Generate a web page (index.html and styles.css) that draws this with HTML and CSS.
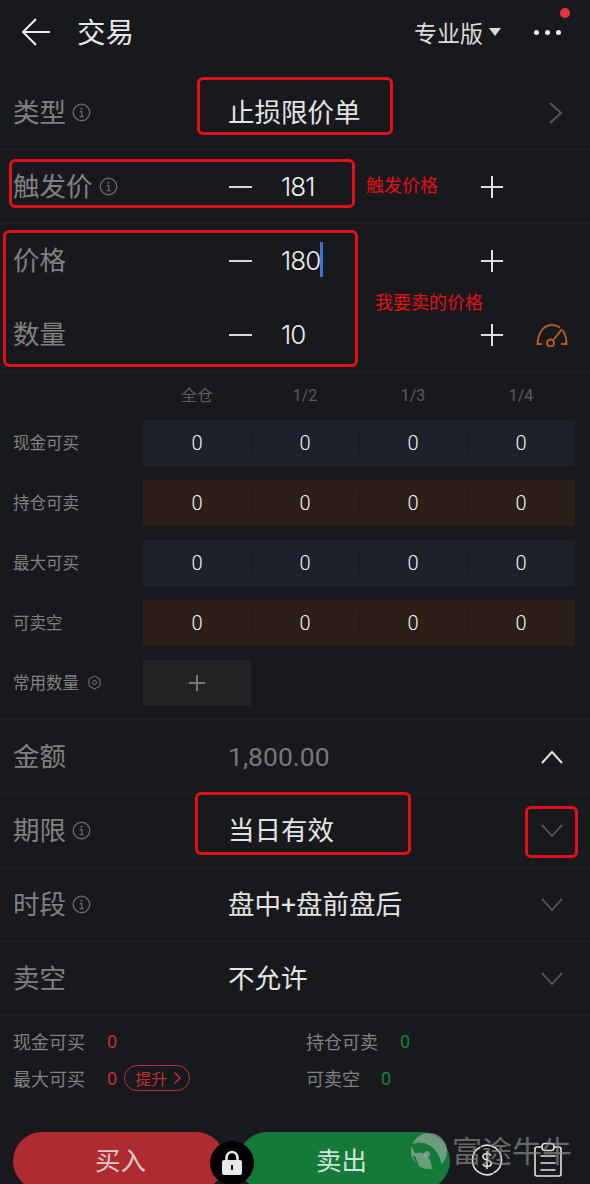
FILE: index.html
```html
<!DOCTYPE html>
<html lang="zh-CN">
<head>
  <meta charset="UTF-8" />
  <meta name="viewport" content="width=device-width, initial-scale=1" />
  <title>交易</title>
  <link rel="stylesheet" href="styles.css">
</head>
<body>
  <div class="page">
    <header class="topbar">
      <svg class="back-icon" width="30" height="30" viewBox="0 0 30 30"><path d="M15 2 2 15l13 13M2 15h27"/></svg>
      <div class="title">交易</div>
      <div class="version">专业版<span class="caret"></span></div>
      <div class="more"><span></span><span></span><span></span><i class="more-dot"></i></div>
    </header>

    <section class="form">
      <div class="row row-select">
        <div class="label">类型<svg class="info"><use href="#i-info"/></svg></div>
        <div class="value">止损限价单</div>
        <svg class="chev" viewBox="0 0 24 24"><use href="#i-right"/></svg>
      </div>
      <div class="row row-step">
        <div class="label">触发价<svg class="info"><use href="#i-info"/></svg></div>
        <div class="stepper"><span class="minus"></span><span class="num">181</span></div>
        <span class="plus"></span>
      </div>
      <div class="row row-step no-line">
        <div class="label">价格</div>
        <div class="stepper"><span class="minus"></span><span class="num">180<i class="cursor"></i></span></div>
        <span class="plus"></span>
      </div>
      <div class="row row-step">
        <div class="label">数量</div>
        <div class="stepper"><span class="minus"></span><span class="num">10</span></div>
        <span class="plus"></span>
        <svg class="gauge" width="32" height="24" viewBox="0 0 32 24">
          <path d="M6 21H1.500C2 9 8 2 16 2c3 0 6 1 8 2.500M26.500 7c2.500 3.500 4 8.500 4 14H25"/>
          <circle cx="14.500" cy="20" r="3.500"/>
          <path d="M17 17.500 26 6"/>
        </svg>
      </div>
    </section>

    <section class="qty">
      <div class="qty-row qty-head">
        <div></div>
        <div class="qty-cols"><span>全仓</span><span>1/2</span><span>1/3</span><span>1/4</span></div>
      </div>
      <div class="qty-row">
        <div class="qty-label">现金可买</div>
        <div class="qty-cols cells buy"><span>0</span><span>0</span><span>0</span><span>0</span></div>
      </div>
      <div class="qty-row">
        <div class="qty-label">持仓可卖</div>
        <div class="qty-cols cells sell"><span>0</span><span>0</span><span>0</span><span>0</span></div>
      </div>
      <div class="qty-row">
        <div class="qty-label">最大可买</div>
        <div class="qty-cols cells buy"><span>0</span><span>0</span><span>0</span><span>0</span></div>
      </div>
      <div class="qty-row">
        <div class="qty-label">可卖空</div>
        <div class="qty-cols cells sell"><span>0</span><span>0</span><span>0</span><span>0</span></div>
      </div>
      <div class="qty-row">
        <div class="qty-label">常用数量
          <svg class="hex" width="13" height="15" viewBox="0 0 13 15"><path d="M6.500 1 12 4v7l-5.500 3L1 11V4z"/><circle cx="6.500" cy="7.500" r="2"/></svg>
        </div>
        <div class="qty-cols"><span class="add-cell"><i class="plus plus-small"></i></span></div>
      </div>
    </section>

    <section class="form form-lower">
      <div class="row row-select">
        <div class="label">金额</div>
        <div class="value value-muted">1,800.00</div>
        <svg class="chev chev-up" viewBox="0 0 24 24"><use href="#i-up"/></svg>
      </div>
      <div class="row row-select">
        <div class="label">期限<svg class="info"><use href="#i-info"/></svg></div>
        <div class="value">当日有效</div>
        <svg class="chev" viewBox="0 0 24 24"><use href="#i-down"/></svg>
      </div>
      <div class="row row-select">
        <div class="label">时段<svg class="info"><use href="#i-info"/></svg></div>
        <div class="value">盘中+盘前盘后</div>
        <svg class="chev" viewBox="0 0 24 24"><use href="#i-down"/></svg>
      </div>
      <div class="row row-select">
        <div class="label">卖空</div>
        <div class="value">不允许</div>
        <svg class="chev" viewBox="0 0 24 24"><use href="#i-down"/></svg>
      </div>
    </section>

    <section class="stats">
      <div class="stat"><span class="stat-name">现金可买</span><span class="stat-num red">0</span></div>
      <div class="stat"><span class="stat-name">持仓可卖</span><span class="stat-num green">0</span></div>
      <div class="stat"><span class="stat-name">最大可买</span><span class="stat-num red">0</span><span class="boost">提升<svg width="9" height="14" viewBox="0 0 9 14"><path d="M1.500 1.500 7 7l-5.500 5.500"/></svg></span></div>
      <div class="stat"><span class="stat-name stat-short">可卖空</span><span class="stat-num green">0</span></div>
    </section>

    <footer class="actions">
      <div class="trade-btns">
        <button class="btn btn-buy">买入</button>
        <button class="btn btn-sell">卖出</button>
        <div class="lock">
          <svg width="24" height="26" viewBox="0 0 24 26"><path class="lock-arc" d="M6.500 12V7.500a5.500 5.500 0 0 1 11 0V12"/><rect x="2" y="10" width="20" height="15" rx="2"/><rect class="lock-hole" x="11" y="15" width="2" height="5"/></svg>
        </div>
      </div>
      <svg class="tool-dollar" width="32" height="34" viewBox="0 0 32 34">
        <path d="M10 3.500A14.500 14.500 0 0 1 30.500 17a14.500 14.500 0 0 1-8 13M22 30.500A14.500 14.500 0 0 1 1.500 17 14.500 14.500 0 0 1 9.500 4"/>
        <path d="M20 12.500c-1-1.500-2.300-2-4-2-2.500 0-4 1.300-4 3.200 0 4.300 8.300 2.300 8.300 6.600 0 2-1.700 3.200-4.300 3.200-1.900 0-3.400-.8-4.300-2.300M16 8v18"/>
      </svg>
      <svg class="tool-list" width="28" height="36" viewBox="0 0 28 36">
        <path d="M8 5H3a2 2 0 0 0-2 2v25a2 2 0 0 0 2 2h22a2 2 0 0 0 2-2V7a2 2 0 0 0-2-2h-5"/>
        <rect x="8" y="1.500" width="12" height="7" rx="3"/>
        <path d="M6.500 14h15M6.500 21h15M6.500 28h15"/>
      </svg>
    </footer>

    <!-- red notes drawn over the screenshot -->
    <div class="mark mark-type"></div>
    <div class="mark mark-trigger"></div>
    <div class="mark mark-price"></div>
    <div class="mark mark-term"></div>
    <div class="mark mark-chev"></div>
    <div class="note note-trigger">触发价格</div>
    <div class="note note-price">我要卖的价格</div>

    <div class="watermark">
      <svg width="38" height="38" viewBox="0 0 38 38">
        <mask id="wm-band">
          <rect width="38" height="38" fill="#fff"/>
          <path d="M3 17C12 13 25 17 27 36" fill="none" stroke="#000" stroke-width="10"/>
          <path d="M8 34 4 24" fill="none" stroke="#000" stroke-width="2"/>
        </mask>
        <circle cx="19" cy="19" r="18" mask="url(#wm-band)"/>
        <circle cx="17" cy="22" r="3"/>
      </svg>
      <span>富途牛牛</span>
    </div>
  </div>

  <svg class="defs" width="0" height="0">
    <symbol id="i-info" viewBox="0 0 20 20">
      <circle cx="10" cy="10" r="8.700" fill="none" stroke="currentColor" stroke-width="1.400"/>
      <circle cx="10" cy="6" r="1.100" fill="currentColor"/>
      <path d="M8.200 9h2.200v5M8 14.300h4.400" fill="none" stroke="currentColor" stroke-width="1.300"/>
    </symbol>
    <symbol id="i-right" viewBox="0 0 24 24"><path d="M10 2l11 10-11 10" fill="none" stroke="currentColor" stroke-width="1.800"/></symbol>
    <symbol id="i-down" viewBox="0 0 24 24"><path d="M2 6l10 11L22 6" fill="none" stroke="currentColor" stroke-width="1.800"/></symbol>
    <symbol id="i-up" viewBox="0 0 24 24"><path d="M2 18 12 7l10 11" fill="none" stroke="currentColor" stroke-width="2"/></symbol>
  </svg>
</body>
</html>
```

FILE: styles.css
```css
* {
  box-sizing: border-box;
}
body {
  margin: 0;
  background: #18191c;
  color: #e6e6e6;
  font-family: Roboto, "Noto Sans CJK SC", sans-serif;
}
.page {
  position: relative;
  width: 590px;
  height: 1184px;
  overflow: hidden;
  background: #18191c;
}
.defs {
  position: absolute;
}

.topbar {
  display: flex;
  align-items: center;
  height: 76px;
  padding: 0 0 12px 21px;
}
.back-icon {
  fill: none;
  stroke: #eee;
  stroke-width: 2;
}
.title {
  margin-left: 26px;
  padding-bottom: 3px;
  font-size: 28.500px;
  color: #e8e8e8;
}
.version {
  display: flex;
  align-items: center;
  margin-left: auto;
  font-size: 23px;
  color: #dcdcdc;
}
.caret {
  width: 0;
  height: 0;
  margin-left: 6px;
  border-left: 6.500px solid transparent;
  border-right: 6.500px solid transparent;
  border-top: 8px solid #dcdcdc;
}
.more {
  position: relative;
  display: flex;
  gap: 6px;
  margin: 0 29px 0 33px;
}
.more span {
  width: 5px;
  height: 5px;
  border-radius: 50%;
  background: #eee;
}
.more-dot {
  position: absolute;
  top: -22px;
  right: -9px;
  width: 10px;
  height: 10px;
  border-radius: 50%;
  background: #e5343f;
}

.row {
  display: grid;
  align-items: center;
  height: 74px;
  padding-left: 13px;
  border-bottom: 1px solid #1f2023;
}
.no-line {
  border-bottom-color: #1b1c1f;
}
.row-select {
  grid-template-columns: 215px 1fr 24px;
  padding-right: 26px;
}
.row-step {
  grid-template-columns: 215px 1fr 22px 72px;
  padding-right: 15px;
}
.label {
  display: flex;
  align-items: center;
  gap: 6px;
  padding-bottom: 4px;
  font-size: 26.500px;
  color: #808082;
}
.info {
  width: 19px;
  height: 19px;
  margin-top: 4px;
  color: #68686a;
}
.value {
  padding-bottom: 4px;
  font-size: 26.500px;
  color: #e4e4e4;
}
.value-muted {
  padding-bottom: 0;
  color: #77787a;
}
.chev {
  width: 24px;
  height: 24px;
  color: #58595b;
}
.chev-up {
  color: #e4e4e4;
}
.stepper {
  display: flex;
  align-items: center;
  gap: 29px;
}
.minus {
  width: 23px;
  height: 2px;
  margin-left: 1px;
  background: #d8d8d8;
}
.num {
  position: relative;
  font-family: Inter, Roboto, sans-serif;
  font-size: 26px;
  font-weight: 300;
  letter-spacing: -1px;
  color: #eee;
}
.cursor {
  position: absolute;
  top: -3px;
  right: -3px;
  width: 3px;
  height: 35px;
  background: #3f6fd0;
}
.plus {
  position: relative;
  display: block;
  width: 22px;
  height: 22px;
  background:
    linear-gradient(#e0e0e0, #e0e0e0) center / 100% 2px no-repeat,
    linear-gradient(#e0e0e0, #e0e0e0) center / 2px 100% no-repeat;
}
.gauge {
  margin-left: 33px;
  fill: none;
  stroke: #b8592a;
  stroke-width: 2;
}

.qty {
  padding: 13px 15px 13px 13px;
  border-bottom: 1px solid #1f2023;
}
.qty-row {
  display: grid;
  grid-template-columns: 130px 1fr;
  align-items: center;
  height: 46px;
  margin-bottom: 14px;
}
.qty-row:last-child {
  margin-bottom: 0;
}
.qty-head {
  height: 22px;
  margin-bottom: 13px;
  line-height: 22px;
}
.qty-head span {
  font-size: 16px;
  color: #5c5d5f;
}
.qty-label {
  display: flex;
  align-items: center;
  gap: 9px;
  padding-bottom: 2px;
  font-size: 16.500px;
  color: #818183;
}
.hex {
  fill: none;
  stroke: #77787a;
}
.qty-cols {
  display: grid;
  grid-template-columns: repeat(4, 108px);
  height: 100%;
  align-items: center;
  text-align: center;
}
.cells span {
  height: 100%;
  line-height: 46px;
  font-size: 20px;
  font-weight: 300;
  color: #f4f4f4;
  background-image: linear-gradient(rgba(0, 0, 0, 0.22), rgba(0, 0, 0, 0.22));
  background-size: 1px 24px;
  background-position: left center;
  background-repeat: no-repeat;
}
.cells span:first-child {
  background-image: none;
}
.buy {
  background: #1c212c;
}
.sell {
  background: #2b1f18;
}
.add-cell {
  display: flex;
  align-items: center;
  justify-content: center;
  height: 46px;
  background: #222325;
}
.plus-small {
  width: 16px;
  height: 16px;
  background:
    linear-gradient(#77787a, #77787a) center / 100% 2px no-repeat,
    linear-gradient(#77787a, #77787a) center / 2px 100% no-repeat;
}

.stats {
  display: grid;
  grid-template-columns: 293px 1fr;
  row-gap: 11px;
  padding: 12px 0 0 13px;
}
.stat {
  display: flex;
  align-items: center;
  height: 26px;
  font-size: 18px;
  color: #808082;
}
.stat-name {
  width: 94px;
}
.stat-short {
  width: 75px;
}
.stat-num {
  font-size: 18px;
}
.red {
  color: #bd3238;
}
.green {
  color: #17803d;
}
.boost {
  display: flex;
  align-items: center;
  gap: 6px;
  height: 26px;
  margin-left: 7px;
  padding: 0 7px 0 10px;
  border: 1px solid #bd3238;
  border-radius: 13px;
  font-size: 16px;
  color: #bd3238;
}
.boost svg {
  fill: none;
  stroke: #bd3238;
  stroke-width: 1.500;
}

.actions {
  display: flex;
  align-items: flex-start;
  margin-top: 41px;
  padding-left: 13px;
}
.trade-btns {
  position: relative;
  display: flex;
  width: 437px;
}
.btn {
  height: 58px;
  padding: 0 0 5px;
  border: none;
  border-radius: 29px;
  font-family: inherit;
  font-size: 25.500px;
  color: #dcc9c9;
}
.btn-buy {
  width: 212px;
  padding-left: 3px;
  background: #b02a31;
}
.btn-sell {
  width: 212px;
  margin-left: 13px;
  padding-right: 5px;
  background: #137a39;
  color: #cfe3d6;
}
.lock {
  position: absolute;
  top: 9px;
  left: 197px;
  display: flex;
  align-items: center;
  justify-content: center;
  width: 44px;
  height: 44px;
  border-radius: 50%;
  background: #000;
}
.lock svg {
  fill: #e8e8ea;
}
.lock .lock-arc {
  fill: none;
  stroke: #e8e8ea;
  stroke-width: 2.500;
}
.lock .lock-hole {
  fill: #111;
}
.tool-dollar,
.tool-list {
  flex: none;
  margin-top: 11px;
  fill: none;
  stroke: #e2e2e2;
  stroke-width: 1.600;
}
.tool-dollar {
  margin-left: 21px;
}
.tool-list {
  margin-left: 31px;
  margin-top: 10px;
}

.mark {
  position: absolute;
  border: 3px solid #e3101a;
  border-radius: 6px;
}
.mark-type {
  left: 197px;
  top: 77px;
  width: 196px;
  height: 58px;
}
.mark-trigger {
  left: 9px;
  top: 159px;
  width: 346px;
  height: 49px;
}
.mark-price {
  left: 3px;
  top: 230px;
  width: 355px;
  height: 137px;
}
.mark-term {
  left: 195px;
  top: 792px;
  width: 216px;
  height: 63px;
}
.mark-chev {
  left: 525px;
  top: 806px;
  width: 53px;
  height: 52px;
}
.note {
  position: absolute;
  font-size: 18px;
  color: #e3101a;
}
.note-trigger {
  left: 366px;
  top: 171px;
}
.note-price {
  left: 375px;
  top: 288px;
}
.watermark {
  position: absolute;
  left: 410px;
  top: 1127px;
  display: flex;
  align-items: center;
  gap: 4px;
  font-size: 30px;
  color: rgba(150, 150, 150, 0.65);
}
.watermark span {
  padding-bottom: 4px;
}
.watermark svg {
  fill: rgba(170, 178, 174, 0.6);
}
```
